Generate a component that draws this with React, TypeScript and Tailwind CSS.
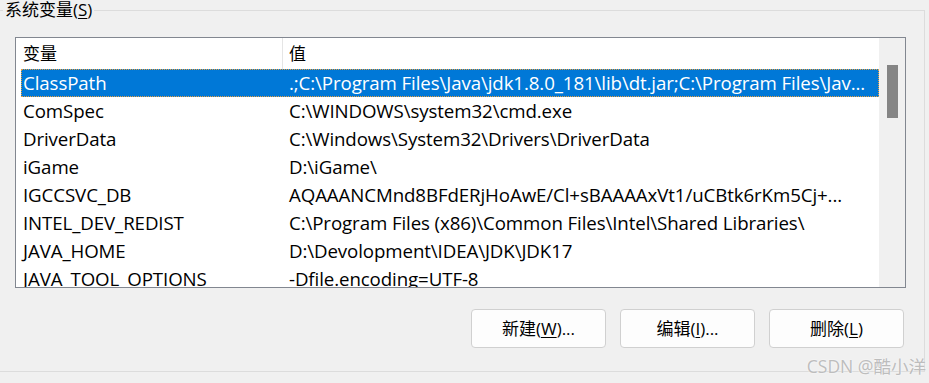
const rows: [string, string][] = [
  ["ClassPath", ".;C:\\Program Files\\Java\\jdk1.8.0_181\\lib\\dt.jar;C:\\Program Files\\Jav..."],
  ["ComSpec", "C:\\WINDOWS\\system32\\cmd.exe"],
  ["DriverData", "C:\\Windows\\System32\\Drivers\\DriverData"],
  ["iGame", "D:\\iGame\\"],
  ["IGCCSVC_DB", "AQAAANCMnd8BFdERjHoAwE/Cl+sBAAAAxVt1/uCBtk6rKm5Cj+..."],
  ["INTEL_DEV_REDIST", "C:\\Program Files (x86)\\Common Files\\Intel\\Shared Libraries\\"],
  ["JAVA_HOME", "D:\\Devolopment\\IDEA\\JDK\\JDK17"],
  ["JAVA_TOOL_OPTIONS", "-Dfile.encoding=UTF-8"],
];

function Button({ label, hotkey, rest }: { label: string; hotkey: string; rest: string }) {
  return (
    <button className="w-[135px] h-[39px] rounded-[4px] border border-[#d0d0d0] bg-[#fdfdfd] text-[17px] text-black">
      {label}(<span className="underline underline-offset-2">{hotkey}</span>){rest}
    </button>
  );
}

export default function App() {
  return (
    <div
      className="relative w-[929px] h-[383px] overflow-hidden bg-[#f0f0f0] text-black"
      style={{ fontFamily: '"Open Sans", "Noto Sans CJK SC", sans-serif' }}
    >
      <fieldset className="w-[925px] h-[372px] border border-l-0 border-[#dcdcdc]">
        <legend className="ml-[3px] px-[2px] text-[17px] leading-[20px] text-black">
          系统变量(<span className="underline underline-offset-2">S</span>)
        </legend>

        {/* 列表 */}
        <div className="ml-[15px] mt-[17px] w-[891px] h-[251px] border border-[#828790] bg-white flex overflow-hidden">
          <div className="flex-1 flex flex-col pl-[5px]">
            <div className="h-[31px] flex items-stretch shrink-0 text-[17px]">
              <div className="w-[262px] border-r border-[#e5e5e5] flex items-center pl-[2px]">变量</div>
              <div className="flex items-center pl-[6px]">值</div>
            </div>
            {rows.map(([name, value], i) => (
              <div
                key={name}
                className={`h-[28px] shrink-0 flex items-center text-[18.7px] tracking-[-0.1px] whitespace-nowrap ${
                  i === 0 ? "bg-[#0078d7] text-white outline-1 outline-dotted outline-[#e8a040] -outline-offset-1" : ""
                }`}
              >
                <div className="w-[262px] pl-[2px]">{name}</div>
                <div className="pl-[6px]">{value}</div>
              </div>
            ))}
          </div>

          {/* 滚动条 */}
          <div className="w-[26px] shrink-0 bg-[#f0f0f0] flex justify-center pt-[27px]">
            <div className="w-[11px] h-[53px] bg-[#858585]" />
          </div>
        </div>

        <div className="flex justify-end gap-[14px] mt-[21px] mr-[20px]">
          <Button label="新建" hotkey="W" rest="..." />
          <Button label="编辑" hotkey="I" rest="..." />
          <Button label="删除" hotkey="L" rest="" />
        </div>
      </fieldset>

      {/* 水印 */}
      <div className="absolute right-[3px] bottom-[4px] text-[17.5px] text-[#bdbdbd]" style={{ textShadow: "0 0 2px #fff" }}>
        CSDN @酷小洋
      </div>
    </div>
  );
}
